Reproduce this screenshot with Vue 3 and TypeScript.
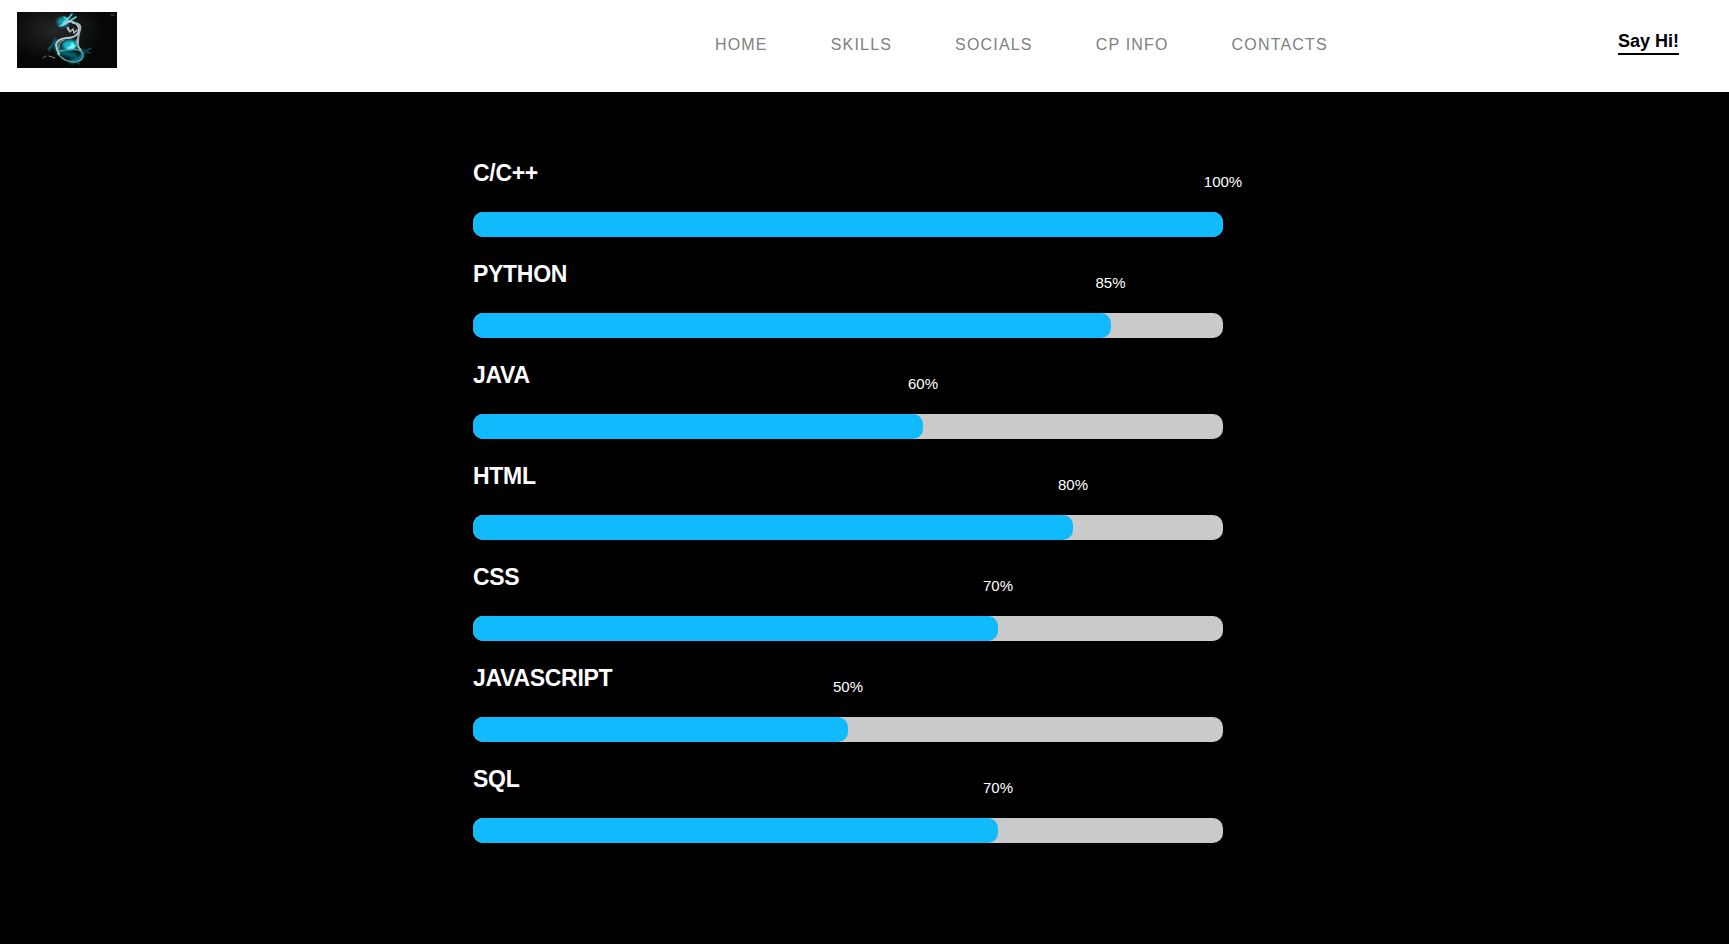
<script setup lang="ts">
interface Skill {
  name: string
  level: number
}

const links: string[] = ['HOME', 'SKILLS', 'SOCIALS', 'CP INFO', 'CONTACTS']

const skills: Skill[] = [
  { name: 'C/C++', level: 100 },
  { name: 'PYTHON', level: 85 },
  { name: 'JAVA', level: 60 },
  { name: 'HTML', level: 80 },
  { name: 'CSS', level: 70 },
  { name: 'JAVASCRIPT', level: 50 },
  { name: 'SQL', level: 70 },
]
</script>

<template>
  <div class="page">
    <header class="header">
      <svg class="logo" viewBox="0 0 100 56" role="img" aria-label="Dragon logo">
        <defs>
          <radialGradient id="smoke">
            <stop offset="0" stop-color="#262626" />
            <stop offset="1" stop-color="#050606" />
          </radialGradient>
          <filter id="glow" x="-50%" y="-50%" width="200%" height="200%">
            <feGaussianBlur stdDeviation="1.8" />
          </filter>
          <filter id="soft" x="-20%" y="-20%" width="140%" height="140%">
            <feGaussianBlur stdDeviation="0.7" />
          </filter>
        </defs>
        <rect width="100" height="56" fill="#050606" />
        <ellipse cx="38" cy="18" rx="50" ry="32" fill="url(#smoke)" />
        <g filter="url(#glow)">
          <ellipse cx="46" cy="10" rx="6" ry="5" fill="#0a9db2" />
          <ellipse cx="53" cy="33" rx="8" ry="5" fill="#0bbccf" />
          <path d="M40 28Q36 36 45 40T60 43" fill="none" stroke="#066c79" stroke-width="5" />
          <path d="M66 38Q67 47 53 50" fill="none" stroke="#079aaa" stroke-width="3" />
        </g>
        <g filter="url(#soft)" fill="none" stroke-linecap="round">
          <path d="M43 14L47 12L55 2M46 11L50 6M48 12L59 5M51 9L47 5" stroke="#4ed8e5" stroke-width="1.6" />
          <path d="M46 13Q52 7 58 11Q64 15 61 21Q58 26 49 26Q40 27 39 33Q40 38 42 42" stroke="#b4c8ca" stroke-width="2" />
          <path d="M56 11Q65 11 63 18Q61 23 61 29Q60 35 64 38" stroke="#a2b8ba" stroke-width="2" />
          <path d="M51 15L53 20L56 17L57 21L60 18M52 19L50 16" stroke="#c0c9c9" stroke-width="1.2" />
          <path d="M47 28Q41 30 42 36M61 25L59 30L61 34" stroke="#879999" stroke-width="1.2" />
          <path d="M42 39Q51 38 57 37Q66 38 66 44Q65 49 58 50Q48 50 42 43" stroke="#4f9da6" stroke-width="1.5" />
          <path d="M50 36Q54 35 55 31L58 34Q56 38 50 36Z" fill="#9cffff" stroke="#51eaf0" stroke-width="1.5" />
          <path d="M39 27L35 33L31 37M35 34L32 39M69 39L74 36M70 40L73 41M60 50L62 52" stroke="#0a606a" stroke-width="1.2" />
          <path d="M26 46L29 44M32 44L38 46" stroke="#718383" stroke-width="1" />
          <path d="M94 3H97" stroke="#555" stroke-width="1" />
        </g>
        <circle cx="41.5" cy="42" r="1.1" fill="#a6e0c8" />
      </svg>
      <nav class="nav">
        <a v-for="link in links" :key="link" class="link">{{ link }}</a>
      </nav>
      <a class="contact">Say Hi!</a>
    </header>

    <main class="skills">
      <section v-for="skill in skills" :key="skill.name" class="skill">
        <h2 class="name">{{ skill.name }}</h2>
        <div class="track">
          <div class="fill" :style="{ width: skill.level + '%' }">
            <span class="percent">{{ skill.level }}%</span>
          </div>
        </div>
      </section>
    </main>
  </div>
</template>

<style>
body {
  background: #000;
}
</style>

<style scoped>
.page {
  height: 944px;
  overflow: hidden;
  background: #000;
  font-family: "Liberation Sans", Arial, sans-serif;
}
.header {
  display: flex;
  align-items: flex-start;
  box-sizing: border-box;
  height: 92px;
  padding: 12px 50px 0 17px;
  background: #fff;
}
.logo {
  display: block;
  width: 100px;
  height: 56px;
}
.nav {
  display: flex;
  gap: 63px;
  margin-left: 598px;
  padding-top: 24px;
}
.link {
  color: #808080;
  font-size: 16px;
  line-height: 18px;
  letter-spacing: 1.18px;
  white-space: nowrap;
}
.contact {
  margin: 18px 0 0 auto;
  border-bottom: 2px solid #000;
  color: #000;
  font-size: 18px;
  font-weight: 700;
  line-height: 23px;
}
.skills {
  width: 750px;
  margin-left: 473px;
  padding-top: 68px;
}
.skill {
  height: 101px;
}
.name {
  margin: 0 0 25px;
  color: #fff;
  font-size: 23px;
  line-height: 27px;
  letter-spacing: -0.3px;
}
.track {
  height: 25px;
  border-radius: 10px;
  background: #cacaca;
}
.fill {
  position: relative;
  height: 100%;
  border-radius: 10px;
  background: #11bafc;
}
.percent {
  position: absolute;
  top: -39px;
  left: 100%;
  transform: translateX(-50%);
  color: #fff;
  font-size: 15px;
  line-height: 17px;
}
</style>
